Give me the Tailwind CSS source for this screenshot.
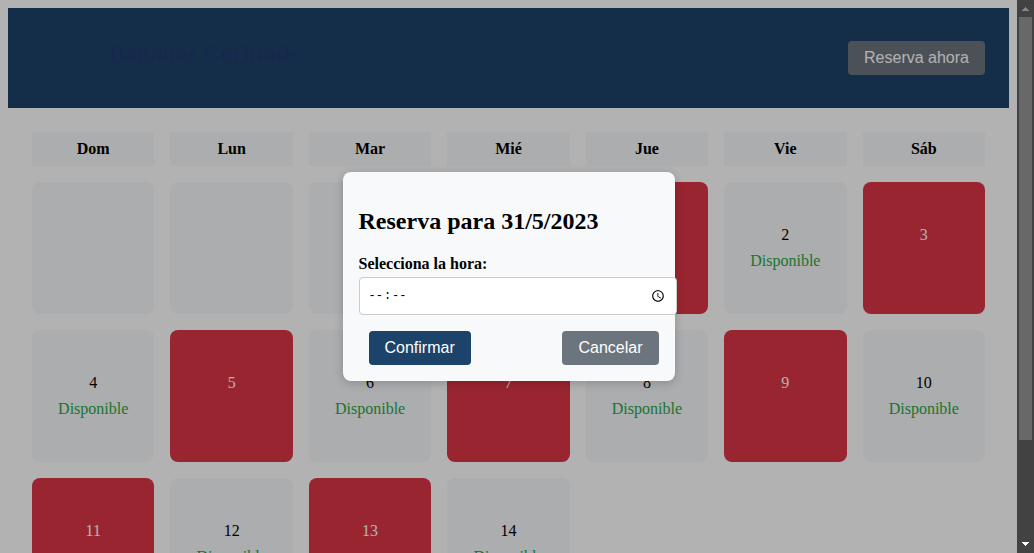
<!DOCTYPE html>
<html lang="es">
<head>
<meta charset="utf-8">
<title>Bananas Cocktails</title>
<script src="https://cdn.jsdelivr.net/npm/@tailwindcss/browser@4"></script>
</head>
<body class="flex h-screen overflow-hidden bg-white font-['Liberation_Serif',serif] text-base leading-[18px] text-black">
  <div class="relative min-w-0 flex-1 overflow-hidden">
    <div class="p-2">
      <header class="flex h-[100px] items-center justify-between bg-[#1e436a] px-6">
        <h1 class="ml-[77px] -mt-2.5 text-2xl leading-7 font-bold text-[#223a70]">Bananas Cocktails</h1>
        <button type="button" class="rounded bg-[#6c757d] px-4 py-2 font-['Liberation_Sans',sans-serif] text-white">Reserva ahora</button>
      </header>
      <main id="calendar" class="grid grid-cols-7 gap-4 p-6 text-center"></main>
    </div>

    <div class="absolute inset-0 flex items-center justify-center bg-black/30">
      <form role="dialog" aria-labelledby="dialog-title" class="w-[332px] rounded-lg bg-[#f8f9fb] p-4 shadow-[0_2px_10px_rgba(0,0,0,0.2)]">
        <h2 id="dialog-title" class="my-5 text-2xl leading-[27px] font-bold">Reserva para 31/5/2023</h2>
        <label for="hora" class="mb-1 block font-bold">Selecciona la hora:</label>
        <input id="hora" type="time" class="box-content block h-5 w-full rounded border border-[#cccccc] bg-white p-2 font-['Liberation_Mono',monospace] text-[13px] [&::-webkit-datetime-edit]:text-xs [&::-webkit-datetime-edit-ampm-field]:hidden">
        <div class="mt-4 flex justify-between font-['Liberation_Sans',sans-serif] text-white">
          <button type="submit" class="ml-2.5 rounded bg-[#1c4369] px-4 py-2">Confirmar</button>
          <button type="button" class="rounded bg-[#6c757d] px-4 py-2">Cancelar</button>
        </div>
      </form>
    </div>
  </div>

  <div aria-hidden="true" class="flex w-[17px] shrink-0 flex-col items-center bg-[#424242]">
    <svg class="h-[17px] w-[17px] shrink-0" viewBox="0 0 17 17" fill="#858585" shape-rendering="crispEdges"><path d="M5 11h7v-1h-1v-1h-1v-1h-1v-1h-1v1h-1v1h-1v1h-1z"/></svg>
    <div class="h-[76.5%] w-[13px] bg-[#686868]"></div>
    <svg class="mt-auto h-[17px] w-[17px] shrink-0" viewBox="0 0 17 17" fill="#ffffff" shape-rendering="crispEdges"><path d="M5 6h7v1h-1v1h-1v1h-1v1h-1v-1h-1v-1h-1v-1h-1z"/></svg>
  </div>

  <script>
    const calendar = document.getElementById('calendar');
    const booked = [1, 3, 5, 7, 9, 11, 13];
    const add = (cls, html) => {
      const el = document.createElement('div');
      el.className = cls;
      el.innerHTML = html;
      calendar.append(el);
    };
    for (const name of ['Dom', 'Lun', 'Mar', 'Mié', 'Jue', 'Vie', 'Sáb']) {
      add('bg-[#f7f8fa] py-2 font-bold', name);
    }
    for (let i = 0; i < 4; i++) add('h-[132px] rounded-lg bg-[#f7f8fa]', '');
    for (let day = 1; day <= 14; day++) {
      if (booked.includes(day)) {
        add('h-[132px] rounded-lg bg-[#dc3545] pt-11 text-white', day);
      } else {
        add('h-[132px] rounded-lg bg-[#f7f8fa] pt-11', day + '<div class="mt-2 text-[#28a745]">Disponible</div>');
      }
    }
  </script>
</body>
</html>
